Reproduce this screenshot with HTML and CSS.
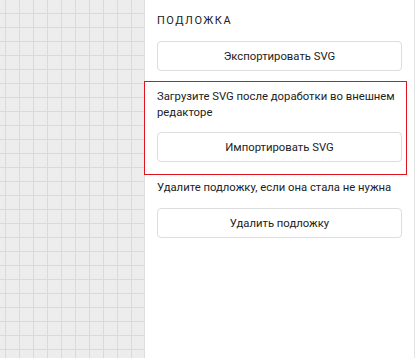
FILE: index.html
```html
<!DOCTYPE html>
<html lang="ru">
  <head>
    <meta charset="UTF-8" />
    <meta name="viewport" content="width=device-width, initial-scale=1.0" />
    <title>Подложка</title>
    <link rel="stylesheet" href="styles.css">
  </head>
  <body>
    <div class="layout">
      <div class="canvas"></div>

      <aside class="panel">
        <h2 class="panel-title">Подложка</h2>
        <button class="btn btn-first">Экспортировать SVG</button>

        <div class="highlight">
          <p class="hint">Загрузите SVG после доработки во внешнем редакторе</p>
          <button class="btn">Импортировать SVG</button>
        </div>

        <p class="hint hint-delete">Удалите подложку, если она стала не нужна</p>
        <button class="btn">Удалить подложку</button>
      </aside>
    </div>
  </body>
</html>
```

FILE: styles.css
```css
* {
  box-sizing: border-box;
}

body {
  margin: 0;
  font-family: Roboto, "Liberation Sans", sans-serif;
  color: #222;
  background: #fff;
}

.layout {
  display: flex;
  height: 358px;
  width: 415px;
}

.canvas {
  width: 144px;
  flex-shrink: 0;
  background-color: #ededed;
  background-image:
    linear-gradient(to right, #dadada 1px, transparent 1px),
    linear-gradient(to bottom, #dadada 1px, transparent 1px);
  background-size: 14px 14px;
  background-position: 5px 13px;
}

.panel {
  flex: 1;
  border-left: 1px solid #dedede;
  border-right: 1px solid #e4e4e4;
  padding: 12px 12px 0 12px;
  display: flex;
  flex-direction: column;
}

.panel-title {
  margin: 1px 0 12px 0;
  font-size: 11px;
  line-height: 16px;
  font-weight: 400;
  letter-spacing: 1.5px;
  text-transform: uppercase;
  color: #222;
}

.btn {
  display: block;
  width: 100%;
  height: 30px;
  padding: 0;
  border: 1px solid #dddddd;
  border-radius: 4px;
  background: #fff;
  font-family: inherit;
  font-size: 11.3px;
  color: #222;
  cursor: pointer;
}

.highlight {
  margin: 10px -5px 0 -13px;
  padding: 7px 4px 12px 12px;
  border: 1px solid #e0141e;
}

.highlight .btn {
  height: 30px;
  margin-top: 11px;
}

.hint {
  margin: 0;
  font-size: 11.3px;
  line-height: 16px;
  color: #222;
}

.hint-delete {
  margin: 5px 0 12px 0;
}
```
